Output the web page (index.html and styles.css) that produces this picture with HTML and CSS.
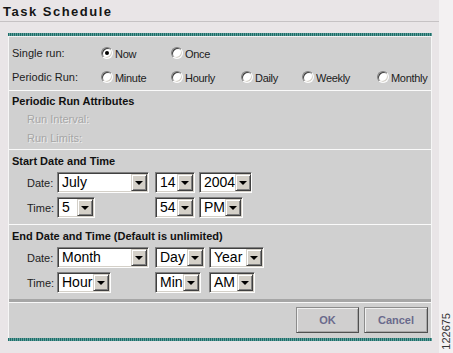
FILE: index.html
```html
<!DOCTYPE html>
<html>
<head>
<meta charset="utf-8">
<title>Task Schedule</title>
<link rel="stylesheet" href="styles.css">
</head>
<body>
<div class="page">
  <div class="main">
    <div class="title">Task Schedule</div>
    <div class="panel">
      <div class="teal"></div>
      <div class="body">
        <div class="hl"></div>
        <div class="sec runs">
          <div class="lbl">Single run:</div>
          <label class="opt"><span class="radio on"></span>Now</label>
          <label class="opt"><span class="radio"></span>Once</label>
          <div></div><div></div><div></div>
          <div class="lbl">Periodic Run:</div>
          <label class="opt"><span class="radio"></span>Minute</label>
          <label class="opt"><span class="radio"></span>Hourly</label>
          <label class="opt"><span class="radio"></span>Daily</label>
          <label class="opt"><span class="radio"></span>Weekly</label>
          <label class="opt"><span class="radio"></span>Monthly</label>
        </div>
        <div class="sep"></div>
        <div class="sec attrs">
          <div class="head">Periodic Run Attributes</div>
          <div class="dis">Run Interval:</div>
          <div class="dis">Run Limits:</div>
        </div>
        <div class="sep"></div>
        <div class="sec dt">
          <div class="head span">Start Date and Time</div>
          <div class="rl">Date:</div>
          <div><span class="sel w92"><span class="val">July</span><span class="arr"></span></span></div>
          <div class="c3"><span class="sel w40"><span class="val">14</span><span class="arr"></span></span></div>
          <div><span class="sel w53"><span class="val">2004</span><span class="arr"></span></span></div>
          <div class="rl">Time:</div>
          <div><span class="sel w38"><span class="val">5</span><span class="arr"></span></span></div>
          <div class="c3"><span class="sel w40"><span class="val">54</span><span class="arr"></span></span></div>
          <div><span class="sel w44"><span class="val">PM</span><span class="arr"></span></span></div>
        </div>
        <div class="sep"></div>
        <div class="sec dt">
          <div class="head span">End Date and Time (Default is unlimited)</div>
          <div class="rl">Date:</div>
          <div><span class="sel w92"><span class="val">Month</span><span class="arr"></span></span></div>
          <div class="c3"><span class="sel w50"><span class="val">Day</span><span class="arr"></span></span></div>
          <div><span class="sel w55"><span class="val">Year</span><span class="arr"></span></span></div>
          <div class="rl">Time:</div>
          <div><span class="sel w54"><span class="val">Hour</span><span class="arr"></span></span></div>
          <div class="c3"><span class="sel w46"><span class="val">Min</span><span class="arr"></span></span></div>
          <div><span class="sel w46"><span class="val">AM</span><span class="arr"></span></span></div>
        </div>
        <div class="dark"></div>
        <div class="buttons">
          <button class="btn ok">OK</button>
          <button class="btn cancel">Cancel</button>
        </div>
      </div>
      <div class="teal"></div>
    </div>
  </div>
  <div class="side"><span class="fig">122675</span></div>
</div>
</body>
</html>
```

FILE: styles.css
```css
* { box-sizing: border-box; }
html, body { margin: 0; padding: 0; }
body {
  font-family: "Liberation Sans", Arial, sans-serif;
  font-size: 11px;
  color: #1c1c1c;
  background: #e9e5e7;
}
.page {
  display: flex;
  height: 353px;
  width: 453px;
}
.main {
  width: 439px;
  background: #e9e5e7;
}
.title {
  height: 22px;
  padding: 3px 0 0 3px;
  line-height: 18px;
  font-size: 13px;
  font-weight: bold;
  letter-spacing: 1.5px;
  color: #151515;
  border-bottom: 1px solid #c6c2c4;
}
.panel {
  width: 424px;
  margin: 11px 0 0 8px;
}
.teal {
  height: 3px;
  background: repeating-linear-gradient(90deg, #1f6d69 0 1px, #5f9f9b 1px 2px);
}
.body {
  background: #d0d0d0;
  border-left: 1px solid #f6f6f6;
  border-right: 1px solid #f6f6f6;
}
.hl { height: 1px; background: #f4f2f2; }
.sep { height: 1px; background: #fafafa; }
.sec { padding-left: 3px; }
.runs {
  display: grid;
  grid-template-columns: 89px 70px 70px 61px 75px auto;
  grid-auto-rows: 24px;
  align-items: center;
  padding-top: 4px;
  padding-bottom: 1px;
  height: 53px;
}
.lbl { color: #1c1c1c; }
.opt {
  display: flex;
  align-items: center;
  gap: 2px;
  color: #1c1c1c;
  padding-top: 1px;
  letter-spacing: -0.3px;
}
.radio {
  position: relative;
  width: 12px;
  height: 12px;
  border-radius: 50%;
  background: #fff;
  border: 1px solid;
  border-color: #808080 #fbfbfb #fbfbfb #808080;
  box-shadow: inset 1px 1px 0 #404040, inset -1px -1px 0 #d4d0c8;
  margin-top: -2px;
  flex: none;
}
.radio.on::after {
  content: "";
  position: absolute;
  left: 3px;
  top: 3px;
  width: 4px;
  height: 4px;
  border-radius: 50%;
  background: #000;
}
.attrs {
  padding-top: 3px;
  padding-bottom: 1px;
  height: 58px;
}
.head {
  font-weight: bold;
  line-height: 14px;
  color: #111;
}
.attrs .head { margin-bottom: 2px; }
.dis {
  line-height: 19px;
  padding-left: 15px;
  color: #a6a6a6;
  text-shadow: 1px 1px 0 #ececec;
}
.dt {
  display: grid;
  grid-template-columns: 45px 98px auto auto;
  justify-content: start;
  grid-template-rows: 14px 21px 21px;
  row-gap: 4px;
  align-items: center;
  padding-top: 4px;
  height: 74px;
}
.dt .span { grid-column: 1 / -1; }
.rl { padding-left: 15px; color: #222; }
.c3 { margin-right: 4px; }
.sel {
  display: flex;
  height: 21px;
  background: #fff;
  border: 1px solid;
  border-color: #808080 #fdfdfd #fdfdfd #808080;
  box-shadow: inset 1px 1px 0 #404040, inset -1px -1px 0 #d4d0c8;
  padding: 1px;
}
.val {
  flex: 1;
  font-size: 14px;
  line-height: 17px;
  padding-left: 3px;
  color: #000;
  white-space: nowrap;
}
.arr {
  position: relative;
  width: 16px;
  height: 17px;
  flex: none;
  background: #d4d0c8;
  border: 1px solid;
  border-color: #d4d0c8 #404040 #404040 #d4d0c8;
  box-shadow: inset 1px 1px 0 #fff, inset -1px -1px 0 #808080;
}
.arr::after {
  content: "";
  position: absolute;
  left: 3px;
  top: 6px;
  border-left: 4px solid transparent;
  border-right: 4px solid transparent;
  border-top: 4px solid #000;
}
.w92 { width: 92px; }
.w40 { width: 40px; }
.w53 { width: 53px; }
.w38 { width: 38px; }
.w44 { width: 44px; }
.w50 { width: 50px; }
.w55 { width: 55px; }
.w54 { width: 54px; }
.w46 { width: 46px; }
.dark {
  height: 4px;
  background: #a6a6a6;
  border-bottom: 1px solid #f8f8f8;
}
.buttons {
  display: flex;
  justify-content: flex-end;
  gap: 5px;
  padding: 4px 3px 0 0;
  height: 35px;
}
.btn {
  height: 26px;
  font-family: "Liberation Sans", Arial, sans-serif;
  font-size: 11px;
  font-weight: bold;
  color: #6a6a8c;
  background: #d0cfcf;
  border: 1px solid;
  border-color: #8c8c8c #505050 #505050 #8c8c8c;
  box-shadow: inset 1px 1px 0 #f0f0f0, inset -1px -1px 0 #a8a8a8;
  padding: 0;
}
.ok { width: 63px; }
.cancel { width: 64px; }
.side {
  width: 14px;
  background: #f3f1f2;
  display: flex;
  flex-direction: column;
  justify-content: flex-end;
  align-items: center;
  padding-bottom: 3px;
}
.fig {
  writing-mode: vertical-rl;
  transform: rotate(180deg);
  font-size: 11px;
  color: #333;
  line-height: 12px;
}
```
